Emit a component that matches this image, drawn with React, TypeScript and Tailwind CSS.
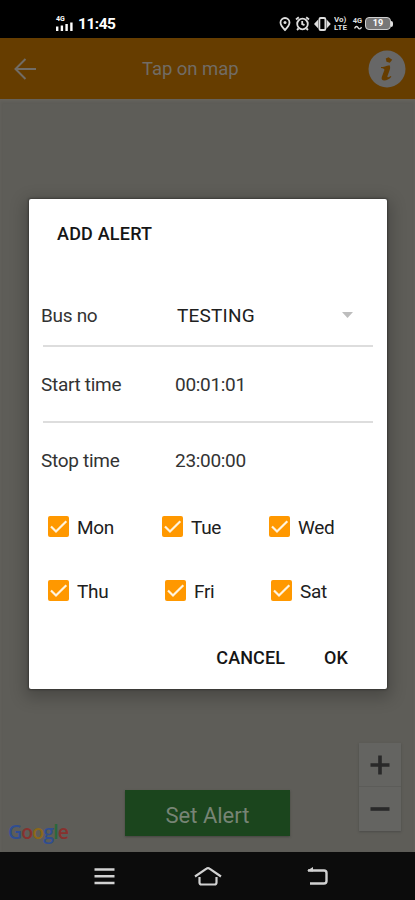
import React from 'react';

interface Day {
  label: string;
  className: string;
}

const WEEK_ROWS: Day[][] = [
  [
    { label: 'Mon', className: 'w-[114px]' },
    { label: 'Tue', className: 'w-[107px]' },
    { label: 'Wed', className: '' },
  ],
  [
    { label: 'Thu', className: 'w-[117px]' },
    { label: 'Fri', className: 'w-[106px]' },
    { label: 'Sat', className: '' },
  ],
];

const StatusBar: React.FC = () => (
  <header className="flex h-[38px] shrink-0 items-start justify-between bg-black pt-[15px] pl-[56px] pr-[22px] text-white">
    <div className="flex items-center gap-[5px]">
      <div className="flex w-[17px] flex-col">
        <span className="h-[6px] text-[7px] leading-[6px] font-bold">4G</span>
        <svg width="17" height="9" viewBox="0 0 17 9" fill="currentColor">
          <path d="M0 4.5h2.400V9H0zM4.700 3.500h2.400V9h-2.400zM9.400 2h2.400v7H9.400zM14.200.5h2.400V9h-2.400z" />
        </svg>
      </div>
      <span className="h-[17px] text-[15.5px] leading-[19px] font-bold tracking-[-0.5px]">11:45</span>
    </div>

    <div className="flex h-[17px] items-center text-[#dedede]">
      <svg className="-ml-px" width="12" height="16" viewBox="0 0 12 16" fill="none" stroke="currentColor" strokeWidth="1.8">
        <path d="M6 14C3.200 11.200 1.500 9 1.500 6.500a4.500 4.500 0 0 1 9 0C10.500 9 8.800 11.200 6 14z" />
        <circle cx="6" cy="6.500" r="1.500" fill="currentColor" stroke="none" />
      </svg>
      <svg className="ml-[4px]" width="15" height="15" viewBox="0 0 15 15" fill="none" stroke="currentColor" strokeWidth="1.800">
        <circle cx="7.500" cy="8" r="5.300" />
        <path d="M7.200 5v3.200l2.300 1M1 3.500 3.800 1.200M11.200 1.200 14 3.500M3.500 12.500 2 14M11.500 12.500 13 14" />
      </svg>
      <svg className="ml-[4px]" width="17" height="14" viewBox="0 0 17 14">
        <rect x="5.400" y="1" width="6" height="12" rx="1.300" fill="none" stroke="currentColor" strokeWidth="1.800" />
        <path d="M4.200 2.500v9L0 7zM12.600 2.500v9L16.800 7z" fill="currentColor" />
      </svg>
      <div className="ml-[3px] flex w-[17px] flex-col text-[8px] leading-[8px] font-bold">
        <span className="h-[8px] overflow-hidden">Vo)</span>
        <span className="h-[8px] overflow-hidden">LTE</span>
      </div>
      <div className="ml-[1px] flex w-[11px] flex-col items-center">
        <span className="text-[7.500px] leading-[8px] font-bold">4G</span>
        <svg width="8" height="6" viewBox="0 0 8 6" fill="none" stroke="currentColor" strokeWidth="1.400">
          <path d="M.5 3.500C2 .5 3.500 1.500 4.200 2.800S6.500 4.500 7.500 2" />
        </svg>
      </div>
      <div className="ml-[2px] flex items-center">
        <div className="flex h-[13px] w-[26px] items-center justify-center rounded-[4px] border-[1.500px] border-[#cfcfcf] bg-[#777777] text-[9px] leading-none font-bold text-white">
          19
        </div>
        <div className="h-[6px] w-[2px] rounded-r-sm bg-[#dedede]" />
      </div>
    </div>
  </header>
);

const TopBar: React.FC = () => (
  <div className="flex h-[61px] shrink-0 items-center bg-[#663d00] pr-[9px] pl-[14px] text-[#716c65]">
    <button aria-label="Back">
      <svg width="23" height="22" viewBox="0 0 23 22" fill="none" stroke="currentColor" strokeWidth="2">
        <path d="M22 11H1.500M11.500 1 1.500 11l10 10" />
      </svg>
    </button>
    <h1 className="ml-[105px] pt-[2px] text-[18.5px] leading-none tracking-[-0.05px]">Tap on map</h1>
    <button className="ml-auto" aria-label="Information">
      <svg width="38" height="38" viewBox="0 0 38 38">
        <circle cx="19" cy="19" r="18.500" fill="#676767" />
        <g fill="#663d00">
          <path d="M17.800 8.500 20.500 7.300 24.200 9.700 21.800 12.700 18.500 11.800z" />
          <path d="M13 17c2.500 0 5.200-1 8.500-1.800 1 1.600.7 3.300.1 5l-2.200 6c-.3 1.500.9 1.500 3.300-.3l.7.800c-2.300 2.600-4.800 3.800-7 3.800-2.400 0-3.200-1.300-2.600-3.400l2.600-7c.2-1.300-1-1.600-3.400-2z" />
        </g>
      </svg>
    </button>
  </div>
);

const MapView: React.FC = () => (
  <main className="flex flex-1 items-end bg-[#5e5d58] shadow-[inset_0_2px_3px_#66635d]">
    <div className="mb-[7px] w-[125px] pl-[8px] text-[19.5px] leading-[26px] font-semibold tracking-[-0.9px] font-['Open_Sans',sans-serif]">
      <span className="text-[#304e91]">G</span>
      <span className="text-[#87312e]">o</span>
      <span className="text-[#8c6818]">o</span>
      <span className="text-[#304e91]">g</span>
      <span className="text-[#28683a]">l</span>
      <span className="text-[#87312e]">e</span>
    </div>
    <button className="mb-[16px] h-[46px] w-[165px] bg-[#1b451d] pt-[5px] text-[22px] leading-none text-[#778475] shadow-[0_1px_2px_#44443f]">
      Set Alert
    </button>
    <div className="mb-[21px] ml-[69px] flex w-[42px] flex-col divide-y divide-[#5c5c59] bg-[#646461] text-[#292929] shadow-[0_1px_2px_#4b4b48]">
      <button aria-label="Zoom in" className="flex h-[44px] items-center justify-center">
        <svg width="20" height="20" viewBox="0 0 20 20" stroke="currentColor" strokeWidth="3.600">
          <path d="M.5 10h19M10 .5v19" />
        </svg>
      </button>
      <button aria-label="Zoom out" className="flex h-[44px] items-center justify-center">
        <svg width="20" height="20" viewBox="0 0 20 20" stroke="currentColor" strokeWidth="3.600">
          <path d="M.5 10h19" />
        </svg>
      </button>
    </div>
  </main>
);

const NavBar: React.FC = () => (
  <nav className="flex h-[48px] shrink-0 items-center bg-[#0c0c0c] pl-[94px] text-[#d2d2d2]">
    <svg width="21" height="18" viewBox="0 0 21 18" stroke="currentColor" strokeWidth="2.400">
      <path d="M.5 2.500h20M.5 9.300h20M.5 16h20" />
    </svg>
    <svg className="ml-[79px]" width="28" height="20" viewBox="0 0 28 20" fill="none" stroke="currentColor" strokeWidth="2.200">
      <path d="M1 10.500 12.500 2.700a2.500 2.500 0 0 1 3 0L27 10.500M5.500 11v5.500a2 2 0 0 0 2 2h13a2 2 0 0 0 2-2V11" />
    </svg>
    <svg className="ml-[85px]" width="21" height="20" viewBox="0 0 21 20" fill="none" stroke="currentColor" strokeWidth="2.400">
      <path d="M1 4.500h16a2.500 2.500 0 0 1 2.500 2.500v8a2.500 2.500 0 0 1-2.500 2.500H3" />
      <path d="M0 4.800 6 1v4.500z" fill="currentColor" stroke="none" />
    </svg>
  </nav>
);

const DayCheckbox: React.FC<Day> = ({ label, className }) => (
  <label className={`flex items-center ${className}`}>
    <svg width="21" height="21" viewBox="0 0 21 21">
      <rect width="21" height="21" rx="2" fill="#ff9800" />
      <path d="m3 10.500 5 5L18.300 5.200" fill="none" stroke="#fff4df" strokeWidth="2.200" />
    </svg>
    <span className="ml-[8px] pt-[2px] text-[19px] leading-none tracking-[-0.3px]">{label}</span>
  </label>
);

const AlertDialog: React.FC = () => (
  <section
    role="dialog"
    aria-label="Add alert"
    className="absolute top-[199px] left-[29px] flex h-[490px] w-[358px] flex-col rounded-[2px] bg-white text-[#333333] shadow-[0_5px_16px_4px_rgba(0,0,0,0.22),0_0_2px_1px_rgba(0,0,0,0.3)]"
  >
    <h2 className="h-[84px] pt-[25px] pl-[28px] text-[18px] leading-[20px] font-medium tracking-[0.2px] text-[#151515]">
      ADD ALERT
    </h2>

    <div className="mr-[14px] ml-[14px] text-[19px] tracking-[-0.3px]">
      <div className="flex h-[64px] items-center border-b-2 border-[#dddddd] pt-[4px]">
        <span className="-ml-[2px] w-[136px]">Bus no</span>
        <span className="flex-1 tracking-[0.2px] text-[#202020]">TESTING</span>
        <svg className="mr-[20px] mb-[3px]" width="11" height="6" viewBox="0 0 11 6">
          <path d="M0 0h11L5.500 6z" fill="#bdbdbd" />
        </svg>
      </div>
      <div className="flex h-[76px] items-center border-b-2 border-[#dddddd] pt-[3px]">
        <span className="-ml-[2px] w-[134px]">Start time</span>
        <span>00:01:01</span>
      </div>
      <div className="flex h-[77px] items-center">
        <span className="-ml-[2px] w-[134px]">Stop time</span>
        <span>23:00:00</span>
      </div>
    </div>

    <div className="mt-[16px] flex flex-col gap-[43px] pl-[19px] text-[#202020]">
      {WEEK_ROWS.map((row) => (
        <div key={row[0].label} className="flex h-[21px]">
          {row.map((day) => (
            <DayCheckbox key={day.label} {...day} />
          ))}
        </div>
      ))}
    </div>

    <div className="mt-[46px] flex justify-end gap-[39px] pr-[39px] text-[18px] leading-[22px] font-medium tracking-[0.1px] text-[#151515]">
      <button>CANCEL</button>
      <button>OK</button>
    </div>
  </section>
);

const App: React.FC = () => (
  <div className="relative flex h-[900px] w-[415px] flex-col overflow-hidden font-['Roboto',sans-serif]">
    <StatusBar />
    <TopBar />
    <MapView />
    <NavBar />
    <AlertDialog />
  </div>
);

export default App;
